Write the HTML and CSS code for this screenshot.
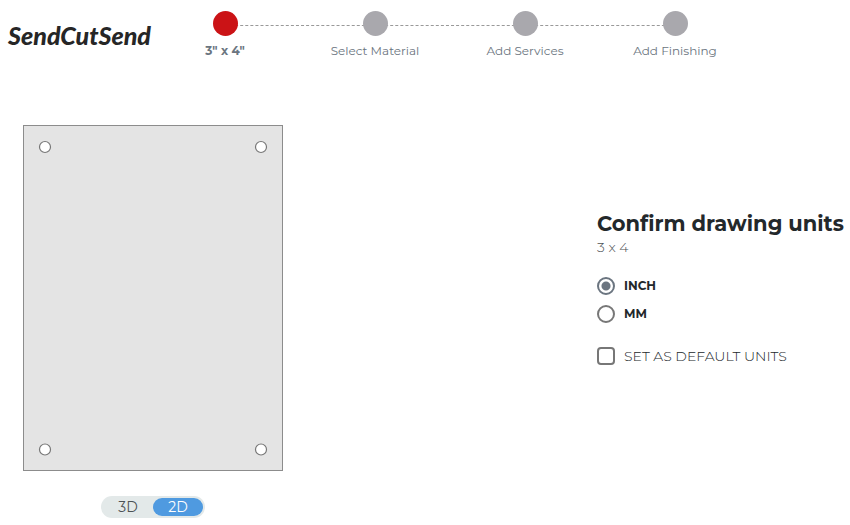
FILE: index.html
```html
<!DOCTYPE html>
<html lang="en">
<head>
    <meta charset="UTF-8">
    <meta name="viewport" content="width=device-width, initial-scale=1.0">
    <title>SendCutSend - Confirm drawing units</title>
    <link rel="stylesheet" href="styles.css">
</head>
<body>
    <header class="header">
        <a href="#" class="logo">SendCutSend</a>
        <ol class="steps">
            <li class="step active"><span class="dot"></span>3" x 4"</li>
            <li class="step"><span class="dot"></span>Select Material</li>
            <li class="step"><span class="dot"></span>Add Services</li>
            <li class="step"><span class="dot"></span>Add Finishing</li>
        </ol>
    </header>
    <main class="content">
        <section class="viewer">
            <svg class="part" viewBox="0 0 260 346" role="img" aria-label="Part preview">
                <rect x="0.5" y="0.5" width="259" height="345" fill="#e4e4e4" stroke="#8c8c8c"/>
                <g fill="#fff" stroke="#777" stroke-width="1.2">
                    <circle cx="22" cy="22" r="5.5"/>
                    <circle cx="238" cy="22" r="5.5"/>
                    <circle cx="22" cy="324.5" r="5.5"/>
                    <circle cx="238" cy="324.5" r="5.5"/>
                </g>
            </svg>
            <div class="toggle">
                <button type="button">3D</button>
                <button type="button" class="selected">2D</button>
            </div>
        </section>
        <form class="units">
            <h1>Confirm drawing units</h1>
            <p class="size">3 x 4</p>
            <div class="option">
                <input type="radio" id="inch" name="units" value="inch" checked>
                <label for="inch">INCH</label>
            </div>
            <div class="option">
                <input type="radio" id="mm" name="units" value="mm">
                <label for="mm">MM</label>
            </div>
            <div class="option default-units">
                <input type="checkbox" id="defaultUnits" name="defaultUnits">
                <label for="defaultUnits">SET AS DEFAULT UNITS</label>
            </div>
        </form>
    </main>
</body>
</html>
```

FILE: styles.css
```css
* {
    box-sizing: border-box;
}

body {
    margin: 0;
    font-family: Montserrat, Inter, sans-serif;
    font-size: 14px;
    color: #23282b;
    background-color: #fff;
}

/* header */
.header {
    display: grid;
    grid-template-columns: 150px minmax(0, 600px);
    padding-top: 11px;
}

.logo {
    padding: 8px 0 0 8px;
    font-family: Lato, sans-serif;
    font-size: 25px;
    line-height: 32px;
    font-weight: 900;
    font-style: italic;
    color: #262626;
    text-decoration: none;
}

.steps {
    display: grid;
    grid-template-columns: repeat(4, 1fr);
    margin: 0;
    padding: 0;
    list-style: none;
}

.step {
    position: relative;
    display: flex;
    flex-direction: column;
    align-items: center;
    gap: 6px;
    font-size: 12px;
    line-height: 18px;
    color: #6b7580;
}

.step.active {
    font-weight: 700;
}

.dot {
    z-index: 1;
    width: 25px;
    height: 25px;
    border-radius: 50%;
    background-color: #a9a8ad;
}

.active .dot {
    background-color: #cb1316;
}

/* dashed line to the next step */
.step:not(:last-child)::after {
    content: "";
    position: absolute;
    top: 14px;
    left: 50%;
    width: 100%;
    border-top: 1px dashed #999;
}

/* content */
.content {
    display: flex;
    justify-content: space-between;
    align-items: flex-start;
    padding: 65px 0 0 23px;
}

.viewer {
    display: flex;
    flex-direction: column;
    align-items: center;
    gap: 25px;
}

.part {
    width: 260px;
}

.toggle {
    display: flex;
    padding: 2px;
    border-radius: 11px;
    background-color: #e3e9e9;
}

.toggle button {
    width: 50px;
    height: 18px;
    padding: 0;
    border: 0;
    border-radius: 9px;
    background: none;
    font-family: inherit;
    font-size: 14px;
    line-height: 18px;
    color: #4c5254;
}

.toggle .selected {
    background-color: #4f9ae0;
    color: #fff;
}

.units {
    width: 253px;
    padding-top: 86px;
}

.units h1 {
    margin: 0;
    font-size: 21px;
    line-height: 26px;
    font-weight: 700;
    white-space: nowrap;
}

.size {
    margin: 0 0 20px;
    line-height: 20px;
    font-weight: 300;
    color: #4c5254;
}

.option {
    display: flex;
    align-items: center;
    gap: 9px;
    margin-bottom: 10px;
    font-size: 12px;
    line-height: 18px;
    font-weight: 700;
}

.option input {
    appearance: none;
    width: 18px;
    height: 18px;
    margin: 0;
    border: 2px solid #777;
    background-color: #fff;
}

.option input[type="radio"] {
    border-radius: 50%;
}

.option input[type="radio"]:checked {
    border-color: #6b7580;
    background: radial-gradient(circle, #6b7580 4px, #fff 5px);
}

.option input[type="checkbox"] {
    border-radius: 4px;
}

.default-units {
    margin-top: 24px;
    font-size: 14px;
    font-weight: 300;
}
```
